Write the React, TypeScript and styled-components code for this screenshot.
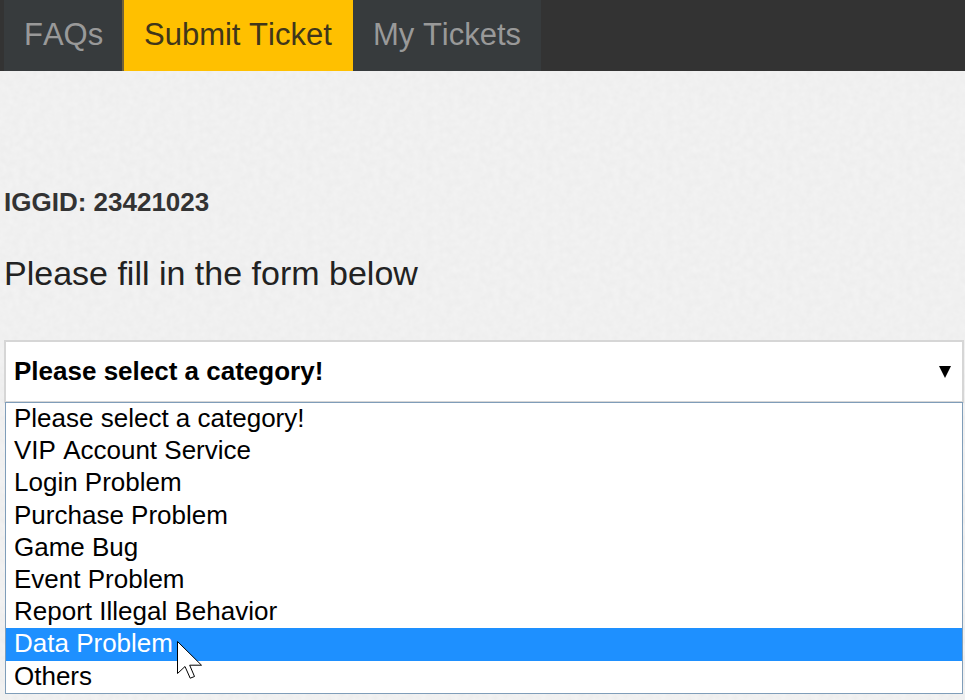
import React from "react";
import styled, { createGlobalStyle } from "styled-components";

const paper = `url("data:image/svg+xml,${encodeURIComponent(
  `<svg xmlns="http://www.w3.org/2000/svg" width="120" height="120"><filter id="p" x="0" y="0" width="100%" height="100%" color-interpolation-filters="sRGB"><feTurbulence type="fractalNoise" baseFrequency="0.15" numOctaves="2" seed="4" stitchTiles="stitch"/><feColorMatrix values="0.03 0 0 0 0.926 0.03 0 0 0 0.926 0.03 0 0 0 0.926 0 0 0 0 1"/></filter><rect width="120" height="120" filter="url(#p)"/></svg>`
)}")`;

const GlobalStyle = createGlobalStyle`
  * { box-sizing: border-box; }
  body {
    margin: 0;
    overflow: hidden;
    background: #f0f0f0 ${paper};
    font-family: "Liberation Sans", Arial, sans-serif;
    font-kerning: none;
  }
`;

const Page = styled.div`
  height: 700px;
  overflow: hidden;
`;

const NavBar = styled.nav`
  display: flex;
  height: 71px;
  padding-left: 4px;
  background: #333333;
`;

const Tab = styled.a<{ $active?: boolean; $width: number }>`
  width: ${(p) => p.$width}px;
  padding-left: 20px;
  border-left: ${(p) => (p.$active ? "2px solid #71633b" : "0")};
  background: ${(p) => (p.$active ? "#ffc000" : "#373b3d")};
  color: ${(p) => (p.$active ? "#40361b" : "#999999")};
  font-size: 31px;
  line-height: 69px;
  white-space: nowrap;
`;

const Content = styled.main`
  padding: 116px 1px 0 4px;
`;

const AccountId = styled.div`
  font-size: 26px;
  font-weight: bold;
  line-height: 30px;
  color: #333333;
`;

const Heading = styled.h1`
  margin: 36px 0 0;
  font-size: 34px;
  font-weight: normal;
  line-height: 40px;
  color: #222222;
`;

const SelectWrap = styled.div`
  position: relative;
  margin-top: 47px;
`;

const SelectBox = styled.div`
  display: flex;
  align-items: center;
  justify-content: space-between;
  height: 63px;
  padding: 0 11px 0 8px;
  border: 2px solid #d6d6d6;
  background: #ffffff;
  font-size: 26px;
  font-weight: bold;
  color: #000000;
`;

const OptionList = styled.ul`
  position: absolute;
  top: 62px;
  left: 1px;
  right: 1px;
  height: 292px;
  margin: 0;
  padding: 0;
  border: 1px solid #7f9db9;
  background: #ffffff;
  list-style: none;
`;

const Option = styled.li<{ $selected: boolean }>`
  height: 32.2px;
  padding-left: 8px;
  background: ${(p) => (p.$selected ? "#1e90ff" : "transparent")};
  color: ${(p) => (p.$selected ? "#ffffff" : "#000000")};
  font-size: 26px;
  line-height: 31px;
`;

const Pointer = styled.svg`
  position: absolute;
  left: 173px;
  top: 300px;
`;

const options = [
  "Please select a category!",
  "VIP Account Service",
  "Login Problem",
  "Purchase Problem",
  "Game Bug",
  "Event Problem",
  "Report Illegal Behavior",
  "Data Problem",
  "Others",
];

export default function App() {
  return (
    <Page>
      <GlobalStyle />
      <NavBar>
        <Tab $width={118}>FAQs</Tab>
        <Tab $active $width={231}>Submit Ticket</Tab>
        <Tab $width={188}>My Tickets</Tab>
      </NavBar>
      <Content>
        <AccountId>IGGID: 23421023</AccountId>
        <Heading>Please fill in the form below</Heading>
        <SelectWrap>
          <SelectBox>
            <span>Please select a category!</span>
            <svg width="12" height="12" viewBox="0 0 12 12">
              <path d="M0 0H12L6 12Z" fill="#000" />
            </svg>
          </SelectBox>
          <OptionList>
            {options.map((label) => (
              <Option key={label} $selected={label === "Data Problem"}>
                {label}
              </Option>
            ))}
          </OptionList>
          <Pointer width="26" height="40" viewBox="0 0 26 40">
            <path
              d="M.5 1.5V33.5L8 26.5L13.2 38.2L17.5 36.5L12.7 25.2H24.5Z"
              fill="#fff"
              stroke="#000"
              strokeWidth="1"
            />
          </Pointer>
        </SelectWrap>
      </Content>
    </Page>
  );
}
